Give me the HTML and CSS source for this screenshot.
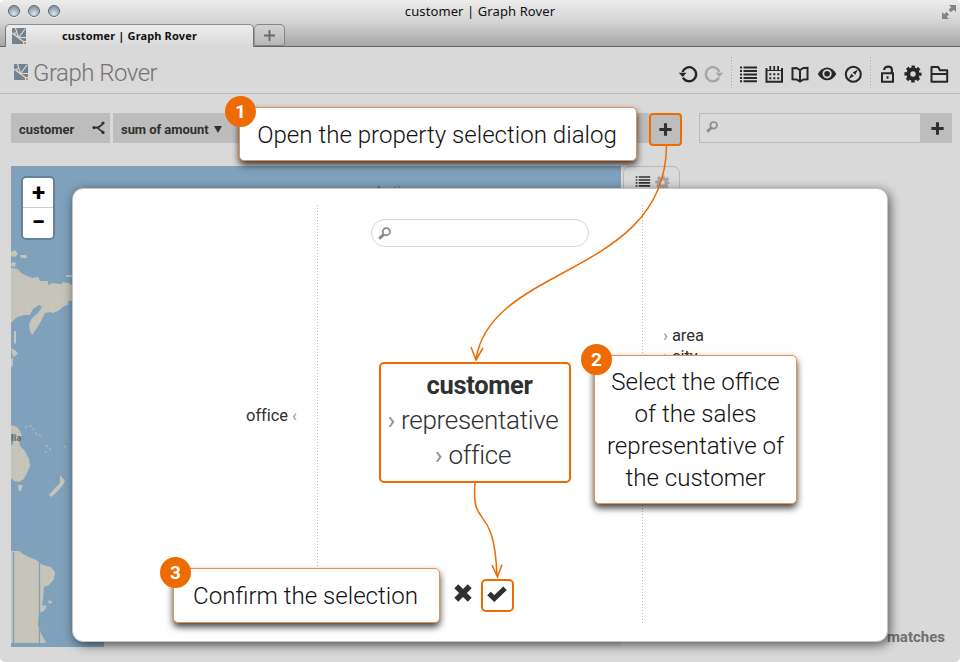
FILE: index.html
```html
<!DOCTYPE html>
<html lang="en">
<head>
<meta charset="utf-8">
<title>customer | Graph Rover</title>
<link rel="stylesheet" href="styles.css">
</head>
<body>
<svg class="defs" width="0" height="0">
  <defs>
    <symbol id="logo" viewBox="0 0 14 16" preserveAspectRatio="none">
      <rect width="14" height="16" rx="1" fill="#74828e"/>
      <path d="M0 5l6 4.500L12 14M6.500 9.500L3.500 0M7 9l6-8M7.500 9.500H14M3 7V4" fill="none" stroke="#dadada" stroke-width="1.200"/>
      <rect x="11" y="13" width="3" height="3" fill="#d9d9d9"/><rect x="12" y="14" width="2" height="2" fill="#eb8a36"/>
    </symbol>
    <symbol id="list" viewBox="0 0 20 20"><path d="M2 3.5h2M2 7h2M2 10.5h2M2 14h2M2 17.3h2M5.5 3.5H19M5.5 7H19M5.5 10.5H19M5.5 14H19M5.5 17.3H19" stroke="currentColor" stroke-width="1.9"/></symbol>
    <symbol id="gear" viewBox="0 0 20 20"><circle cx="10" cy="10" r="4.7" fill="none" stroke="currentColor" stroke-width="4"/><circle cx="10" cy="10" r="7.2" fill="none" stroke="currentColor" stroke-width="2.8" stroke-dasharray="3.3 2.355" stroke-dashoffset="1.65"/></symbol>
    <symbol id="search" viewBox="0 0 12 12"><circle cx="7.7" cy="4.3" r="3.3" fill="none" stroke="currentColor" stroke-width="1.7"/><path d="M5.2 6.8L1.2 10.8" stroke="currentColor" stroke-width="2.8"/></symbol>
    <symbol id="plus" viewBox="0 0 14 14"><path d="M7 .4v13.200M.4 7h13.200" stroke="currentColor" stroke-width="3.300"/></symbol>
  </defs>
</svg>
<div class="window">
  <div class="chrome">
    <div class="titlebar">
      <div class="lights"><i></i><i></i><i></i></div>
      <span class="window-title">customer | Graph Rover</span>
      <svg class="expand" width="16" height="16" viewBox="0 0 16 16"><path d="M8 1h7v7l-2.300-2.300-2.700 2.600-2.500-2.500 2.700-2.600zM1 15V8l2.200 2.200L5.500 8 8 10.500l-2.300 2.300L8 15z" fill="#858585"/></svg>
    </div>
    <div class="tabs">
      <div class="tab"><svg width="14" height="16"><use href="#logo"/></svg><b>customer | Graph Rover</b></div>
      <div class="newtab"><svg width="11" height="11" viewBox="0 0 11 11"><path d="M5.500 0v11M0 5.500h11" stroke="#686868" stroke-width="1.900"/></svg></div>
    </div>
  </div>
  <header class="toolbar">
    <svg class="brand-logo" width="14" height="16"><use href="#logo"/></svg>
    <span class="brand">Graph Rover</span>
    <nav class="icons">
      <svg viewBox="0 0 20 20"><path d="M5 13.600A7 7 0 1 0 4.500 8" fill="none" stroke="currentColor" stroke-width="2.300"/><path d="M.8 8.700h7.700L4.700 13z" fill="currentColor"/></svg>
      <svg class="faded" viewBox="0 0 20 20"><path d="M15 13.600A7 7 0 1 1 15.500 8" fill="none" stroke="currentColor" stroke-width="2.300"/><path d="M19.200 8.700h-7.700l3.800 4.300z" fill="currentColor"/></svg>
      <i class="sep"></i>
      <svg><use href="#list"/></svg>
      <svg viewBox="0 0 20 20"><path d="M2.500 4v13.800h15.500V4" fill="none" stroke="currentColor" stroke-width="2"/><path d="M3 6.500h14.500" stroke="currentColor" stroke-width="1.200"/><path d="M6.300 2v4.500M10.200 2v4.500M14.100 2v4.500" stroke="currentColor" stroke-width="1.800"/><path d="M5.300 10.200h10M5.300 14.200h10" stroke="currentColor" stroke-width="2" stroke-dasharray="2 2"/></svg>
      <svg viewBox="0 0 20 20"><path d="M2.500 4.200L6.500 4 10 6l3.500-2 4-.2v11.500l-4 .2L10 17.500 6.500 15.500l-4-.2zM10 6v11" fill="none" stroke="currentColor" stroke-width="2"/></svg>
      <svg viewBox="0 0 20 20"><path d="M.8 10C5.500 1.200 14.800 1.200 19.300 10 14.800 18.400 5.500 18.400.8 10z" fill="currentColor"/><circle cx="10.100" cy="9.800" r="4.600" fill="#d9d9d9"/><circle cx="10.100" cy="9.800" r="2.800" fill="currentColor"/></svg>
      <svg viewBox="0 0 20 20"><circle cx="10.300" cy="10.300" r="7.500" fill="none" stroke="currentColor" stroke-width="2.100"/><path d="M15 5.500l-2.900 5.500-2.500-2.500zM5.700 15l2.800-5.500 2.500 2.500z" fill="currentColor"/><circle cx="10.300" cy="10.300" r="1" fill="#d9d9d9"/></svg>
      <i class="sep"></i>
      <svg viewBox="0 0 20 20"><path d="M5 9.200h11v8.600H5z" fill="none" stroke="currentColor" stroke-width="2"/><path d="M7.200 6C7.200 1.500 14.900 1.500 14.900 6v3" fill="none" stroke="currentColor" stroke-width="2.200"/><path d="M9.500 12.200h2v2.500h-2z" fill="currentColor"/></svg>
      <svg><use href="#gear"/></svg>
      <svg viewBox="0 0 20 20"><path d="M2.500 17.800V3h6.700l1.700 3.200h7.300v11.600zM3 10h15" fill="none" stroke="currentColor" stroke-width="2" stroke-linejoin="round"/></svg>
    </nav>
  </header>
  <main>
    <div class="query">
      <div class="chip chip-customer">customer<svg width="13" height="14" viewBox="0 0 13 14"><path d="M11.500 1.500C9 6 5 7 1 6.500M5 6.600L11.500 11.500" fill="none" stroke="currentColor" stroke-width="1.600"/><circle cx="2" cy="6.600" r="1.600"/><circle cx="11" cy="2" r="1.600"/><circle cx="11" cy="11.400" r="1.600"/></svg></div>
      <div class="chip chip-sum">sum of amount<i class="caret"></i></div>
      <div class="add marked"><svg width="13" height="13"><use href="#plus"/></svg></div>
      <div class="search"><svg width="12" height="12"><use href="#search"/></svg></div>
      <div class="add"><svg width="13" height="13"><use href="#plus"/></svg></div>
    </div>
    <div class="content">
      <section class="map">
        <svg class="land" width="610" height="481" viewBox="11 166 610 481">
          <defs><pattern id="grid" width="6" height="6" patternUnits="userSpaceOnUse"><rect width="6" height="6" fill="#c7c4ba"/><path d="M0 0h6M0 0v6" stroke="#bdbcb4" stroke-width=".6"/></pattern></defs>
          <g fill="url(#grid)">
            <path d="M11 252l4-2 3 4-3 3-4-1zM20 255l6 0 1 3-6 0zM12 262l4 1-1 4-4-1zM66 275h6v2h-6z"/>
            <path d="M11 268l7 1 3 4 6 3 6 2 5-1 2 4 8 0 0 4 5-2 7 1 2 0 0-2 7 1 4 3v15h-5v4l-4 1-6 5-5 2-3-1-5 1-4 8-4 7-5 7-2-4-1-7 3-6 6-5 4-6-3-2-6 4-3 6-6 0-7 2-6 6-4 1z"/>
            <path d="M14 331h2v12l-2 1zM11 348l5 3 2 3-5 3zM11 358l2 1v6l-2 3zM11 425l6 2 3 4 2 5-3 1-8-4z"/>
            <path d="M11 446l2-2 2-8 3 1 2 9 5 5 4 8 1 7-3 7-3 6-5 3-5-1-3-3zM18 485h5l-2 6h-2z"/>
            <path d="M60 475l5 6-2 4-7 8-5 4-2-2 6-7 5-5z"/>
            <path d="M11 551l8 0 4 3 6 3 7 3 5 4 5 2 5 1 4 5-1 7-5 6-5 2-1 12-1 6 5 1-3 5-5 2-1 12 3 8 5 10H11zM48 600l5 2-4 2z"/>
          </g>
          <path d="M104 600h520v50H104z" fill="#cfcfcd"/>
          <path d="M25 427l6-1 3 4M35 433l6 3M46 445l5 5M45 451l4 3M64 447l3-1" stroke="#b2b9b8" stroke-width="1.300" stroke-dasharray="2.500 2" fill="none"/>
          <path d="M13.500 552v95M39.500 563v84" stroke="#7e9fb9" stroke-width="1.300"/>
        </svg>
        <span class="country">lia</span><span class="arctic">Arctic</span>
        <div class="zoom"><b>+</b><b>−</b></div>
      </section>
      <aside class="legend"><svg width="17" height="17"><use href="#list"/></svg><svg class="faded" width="17" height="17"><use href="#gear"/></svg></aside>
      <div class="matches">matches</div>
    </div>
  </main>
</div>

<div class="dialog">
  <div class="column left"><span>office <i>‹</i></span></div>
  <div class="column middle">
    <div class="filter"><svg width="13" height="13"><use href="#search"/></svg></div>
    <div class="selection"><b>customer</b><span><i>›</i> representative</span><span><i>›</i> office</span></div>
    <div class="actions">
      <svg width="18" height="18" viewBox="0 0 18 18"><path d="M2.300 2.300l13.400 13.400M15.700 2.300L2.300 15.700" stroke="#303030" stroke-width="5.500"/></svg>
      <div class="confirm"><svg width="20" height="16" viewBox="0 0 20 16"><path d="M2 7.500l5.300 5.100L18 2.300" fill="none" stroke="#303030" stroke-width="5"/></svg></div>
    </div>
  </div>
  <div class="column right"><span><i>›</i> area</span><span><i>›</i> city</span></div>
</div>

<svg class="arrows" width="960" height="662" viewBox="0 0 960 662">
  <path d="M666.500 146C665 276 491 264 476 359M471 347l5 13 7-12M475 483C471 532 494 499 497 576M492 565l5.500 12 4.500-12.500"/>
</svg>
<div class="callout c1"><em>1</em>Open the property selection dialog</div>
<div class="callout c2"><em>2</em>Select the office<br>of the sales<br>representative of<br>the customer</div>
<div class="callout c3"><em>3</em>Confirm the selection</div>
</body>
</html>
```
FILE: styles.css
```css
* { box-sizing: border-box; }
body { margin: 0; width: 960px; height: 662px; position: relative; overflow: hidden; background: #fff; font-family: Roboto, "Liberation Sans", sans-serif; color: #303030; }
svg { display: block; flex: none; }
.defs { position: absolute; }
.window { height: 662px; background: #d9d9d9; border-radius: 5px; overflow: hidden; display: flex; flex-direction: column; }
.chrome { height: 47px; flex: none; background: linear-gradient(#ececec, #d2d2d2 50%, #a6a6a6); border-bottom: 1px solid #646464; font-family: "Open Sans", sans-serif; color: #111; }
.titlebar { height: 24px; display: grid; grid-template-columns: 80px 1fr 80px; align-items: center; }
.lights { display: flex; gap: 8px; padding-left: 8px; margin-top: -2px; }
.lights i { width: 12px; height: 12px; border-radius: 50%; border: 1px solid #5f6872; background: radial-gradient(circle at 50% 80%, #dce4ea, #8998a7 75%); box-shadow: 0 1px #eee; }
.window-title { text-align: center; font-family: "Noto Sans", sans-serif; font-size: 13px; letter-spacing: .1px; line-height: 20px; margin-top: -2px; }
.expand { justify-self: end; margin: -1px 3px 0 0; }
.tabs { display: flex; padding-left: 5px; }
.tab { width: 249px; height: 23px; display: flex; align-items: center; padding-left: 6px; border: 1px solid #747474; border-top-color: #909090; border-bottom: 0; border-radius: 5px 5px 0 0; background: linear-gradient(#ededed, #d9d9d9); }
.tab b { flex: 1; padding-right: 23px; text-align: center; font: 700 11px/22px "Noto Sans", sans-serif; letter-spacing: .14px; margin-left: 3px; }
.newtab { width: 31px; height: 22px; display: flex; align-items: center; justify-content: center; border: 1px solid #858585; border-left-color: #999; border-radius: 5px 5px 3px 3px; background: linear-gradient(#d4d4d4, #b7b7b7); }
.toolbar { height: 47px; flex: none; display: flex; align-items: center; padding: 6px 11px 0 14px; border-bottom: 1px solid #b8b8b8; }
.brand-logo { margin-top: -3px; }
.brand { font-size: 24px; font-weight: 300; color: #737373; margin-left: 5px; letter-spacing: -.5px; }
.icons { margin-left: auto; display: flex; gap: 6px; align-items: center; color: #272727; }
.icons svg { width: 20px; height: 20px; margin-top: 1px; }
.icons .faded, .faded { color: #a5a5a5; }
.sep { width: 3px; height: 33px; background: repeating-linear-gradient(#aaa 0 1px, transparent 1px 3px) center / 1px 100% no-repeat; }
.icons svg:nth-child(-n+8), .icons .sep { transform: translateX(1px); }
.icons svg:nth-child(4), .icons svg:nth-child(5), .icons svg:nth-child(6) { transform: none; }
main { padding: 19px 8px 0 11px; display: flex; flex-direction: column; flex: 1; }
.query { display: flex; height: 30px; }
.chip { background: #bdbdbd; font-size: 13px; font-weight: 700; display: flex; align-items: center; padding: 3px 5px 0 8px; }
.chip-customer { width: 99px; justify-content: space-between; margin-right: 3px; }
.chip-customer svg { margin-top: -4px; fill: currentColor; }
.chip-sum { width: 536px; letter-spacing: -.05px; }
.caret { border: 4px solid transparent; border-top: 7px solid #303030; border-bottom: 0; margin-left: 5px; }
.add { width: 32px; background: #bdbdbd; display: flex; align-items: center; justify-content: center; padding-left: 2px; }
.marked { width: 33px; height: 33px; border: 2px solid #ed6b00; border-radius: 4px; margin: 0 17px 0 0; padding: 0; }
.search { width: 221px; border: 1px solid #b8b8b8; border-right: 0; padding: 7px 0 0 6px; color: #8d8d8d; }
.content { display: flex; margin-top: 23px; height: 481px; align-items: flex-start; }
.map { width: 610px; height: 481px; background: #7fa1bb; position: relative; overflow: hidden; }
.zoom { position: absolute; left: 10px; top: 10px; width: 34px; height: 64px; border: 2px solid #66819a; border-radius: 5px; background: #fff; color: #000; }
.zoom b { height: 29px; padding: 1px 0 0 1px; display: flex; align-items: center; justify-content: center; font-size: 24px; line-height: 1; }
.zoom b + b { border-top: 1px solid #ccc; padding-top: 0; }
.country { position: absolute; left: 0; top: 266px; font: 700 9px/12px "Noto Sans", sans-serif; color: #6a6965; }
.arctic { position: absolute; left: 364px; top: 17px; font: 12px/16px "Open Sans", sans-serif; color: #4f565b; }
.land { position: absolute; left: 0; top: 0; }
.legend { width: 57px; height: 40px; border: 1px solid #b8b8b8; border-radius: 7px 7px 0 0; margin-left: 2px; display: flex; gap: 3px; padding: 7px 0 0 10px; }
.matches { margin-left: auto; align-self: flex-end; font-size: 15px; font-weight: 700; color: #707070; padding-right: 7px; line-height: 20px; }
.dialog { position: absolute; left: 72px; top: 188px; width: 816px; height: 454px; padding: 16px 0; border: 1px solid #c4c4c4; border-radius: 11px; background: #fff; box-shadow: 2px 3px 11px rgba(0,0,0,.6); display: grid; grid-template-columns: 244px 326px 1fr; }
.column { display: flex; flex-direction: column; font-size: 16.5px; font-weight: 400; letter-spacing: -.05px; }
.column i { font-style: normal; font-weight: 400; color: #909090; }
.left { align-items: flex-end; padding: 201px 20px 0 0; line-height: 20px; }
.middle { align-items: center; background: repeating-linear-gradient(#b5b5b5 0 1px, transparent 1px 3px) left / 1px 100% no-repeat, repeating-linear-gradient(#b5b5b5 0 1px, transparent 1px 3px) right / 1px 100% no-repeat; }
.filter { width: 218px; height: 28px; border: 1px solid #d7d7d7; border-radius: 14px; margin: 14px 1px 0 0; padding: 7px 6px; color: #8b8b8b; }
.selection { width: 192px; height: 121px; border: 2px solid #ed6b00; border-radius: 5px; margin: 115px 0 0 -10px; padding: 4px 4px 0 0; text-align: center; font-size: 26px; font-weight: 300; line-height: 35px; display: flex; flex-direction: column; letter-spacing: -.3px; }
.selection b { font-size: 25.5px; font-weight: 700; padding-left: 13px; }
.actions { display: flex; align-items: center; gap: 9px; margin: 96px 0 0 8px; }
.actions > svg { margin-top: -5px; }
.confirm { width: 33px; height: 33px; border: 2px solid #ed6b00; border-radius: 5px; padding: 5px 0 0 4px; }
.right { padding: 120px 0 0 20px; line-height: 21px; }
.arrows { position: absolute; left: 0; top: 0; fill: none; stroke: #ed6b00; stroke-width: 1.5; pointer-events: none; }
.callout { position: absolute; background: #fff; border: 1px solid #e8904b; border-radius: 5px; box-shadow: 0 4px 7px rgba(0,0,0,.75); color: #111; text-align: center; font-size: 24.1px; font-weight: 300; line-height: 32px; }
.callout em { position: absolute; width: 31px; height: 31px; left: -15px; top: -12px; border-radius: 50%; background: #ed6b00; color: #fff; font: 700 19px/32px Roboto, sans-serif; }
.c1 { left: 239px; top: 107px; width: 398px; height: 54px; padding: 11px 2px 0 0; }
.c2 { left: 594px; top: 355px; width: 203px; height: 149px; padding: 10px 0 0 0; }
.c3 { left: 173px; top: 568px; width: 267px; height: 55px; padding: 11px 2px 0 0; }
.c2 em, .c3 em { left: -14px; }
```
